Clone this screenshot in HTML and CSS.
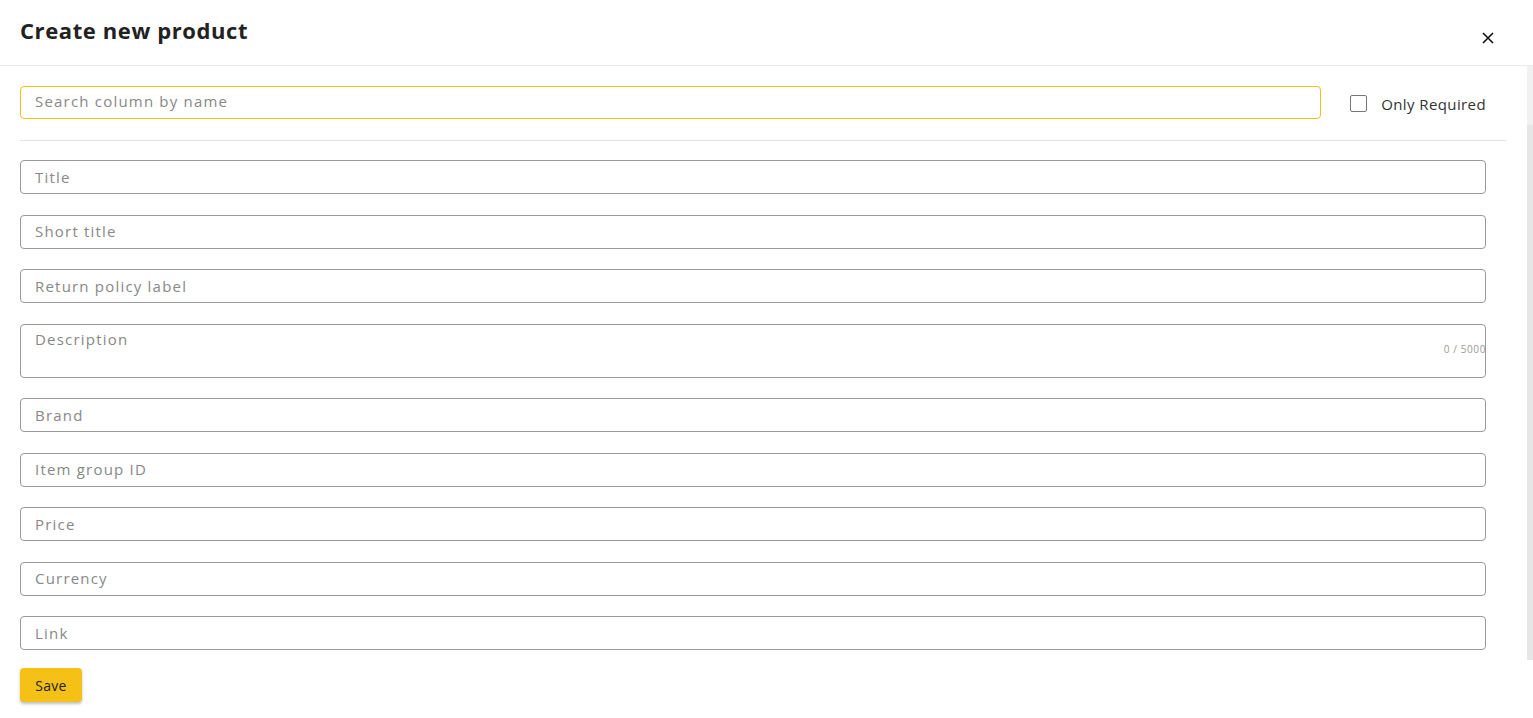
FILE: index.html
```html
<!DOCTYPE html>
<html lang="en">
<head>
    <meta charset="UTF-8" />
    <title>Create new product</title>
    <link rel="stylesheet" href="styles.css">
</head>
<body>
    <div class="modal">
        <div class="modal-header">
            <h2>Create new product</h2>
            <span class="close">
                <svg width="12" height="12" viewBox="0 0 12 12"><path d="M1 1L11 11M11 1L1 11" stroke="#111" stroke-width="1.6" fill="none"/></svg>
            </span>
        </div>
        <div class="modal-body">
            <div class="scroll">
                <div class="search-row">
                    <input class="search" type="text" placeholder="Search column by name">
                    <label class="only-required">
                        <span class="box"></span>
                        <span>Only Required</span>
                    </label>
                </div>
                <div class="divider"></div>
                <div class="fields">
                    <input class="field" type="text" placeholder="Title">
                    <input class="field" type="text" placeholder="Short title">
                    <input class="field" type="text" placeholder="Return policy label">
                    <div class="area-wrap">
                        <textarea class="field area" placeholder="Description"></textarea>
                        <span class="counter">0 / 5000</span>
                    </div>
                    <input class="field" type="text" placeholder="Brand">
                    <input class="field" type="text" placeholder="Item group ID">
                    <input class="field" type="text" placeholder="Price">
                    <input class="field" type="text" placeholder="Currency">
                    <input class="field" type="text" placeholder="Link">
                </div>
            </div>
            <div class="scrollbar"><div class="thumb"></div></div>
        </div>
        <div class="modal-footer">
            <button class="save">Save</button>
        </div>
    </div>
</body>
</html>
```

FILE: styles.css
```css
*{
    margin: 0;
    padding: 0;
    box-sizing: border-box;
    font-family: "Open Sans", "Noto Sans", sans-serif;
}
body,html{
    width: 100%;
    height: 100%;
    background: #fff;
    overflow: hidden;
}
.modal{
    display: flex;
    flex-direction: column;
    height: 718px;
}
.modal-header{
    height: 66px;
    border-bottom: 1px solid #ebebeb;
    display: flex;
    justify-content: space-between;
    padding: 16px 39px 0 20px;
}
.modal-header h2{
    font-size: 22px;
    font-weight: 700;
    color: #222;
    line-height: 28px;
    letter-spacing: 0.6px;
}
.close{
    margin-top: 16px;
    width: 12px;
    height: 12px;
    display: block;
}
.close svg{
    display: block;
}
.modal-body{
    height: 594px;
    display: flex;
}
.scroll{
    flex: 1;
    padding: 20px 21px 0 20px;
}
.scrollbar{
    width: 6px;
    background: #f1f1f1;
    display: flex;
    flex-direction: column;
}
.thumb{
    margin-top: 59px;
    flex: 1;
    background: #e6e6e6;
}
.search-row{
    display: flex;
    align-items: center;
    padding-right: 20px;
}
.search{
    flex: 1;
    height: 33px;
    border: 1px solid #f5c116;
    border-radius: 4px;
    padding: 0 14px 3px;
    font-size: 15px;
    outline: none;
}
.only-required{
    display: flex;
    align-items: center;
    margin-left: 29px;
    padding-top: 2px;
    font-size: 15px;
    letter-spacing: 0.4px;
    color: #333;
}
.box{
    width: 17px;
    height: 17px;
    border: 1px solid #777;
    border-radius: 2px;
    margin-right: 14px;
}
.divider{
    height: 1px;
    background: #e2e2e2;
    margin: 21px 0 19px;
}
.fields{
    display: flex;
    flex-direction: column;
    gap: 20.5px;
    padding-right: 20px;
}
.field{
    width: 100%;
    height: 34px;
    border: 1px solid #999;
    border-radius: 4px;
    padding: 0 14px 1px;
    font-size: 15px;
    color: #333;
    outline: none;
    background: #fff;
}
.area-wrap{
    position: relative;
}
.area{
    display: block;
    height: 54px;
    padding-top: 4px;
    resize: none;
}
.counter{
    position: absolute;
    right: 0;
    top: 18px;
    font-size: 10px;
    letter-spacing: 0.6px;
    color: #999;
}
::placeholder{
    color: #888;
    letter-spacing: 1.2px;
}
.modal-footer{
    padding: 8px 20px;
}
.save{
    width: 62px;
    height: 34px;
    border: none;
    border-radius: 4px;
    background: #f5c116;
    color: #222;
    font-size: 14px;
    letter-spacing: 0.3px;
    box-shadow: 0 2px 3px rgba(0,0,0,0.25);
}
```
